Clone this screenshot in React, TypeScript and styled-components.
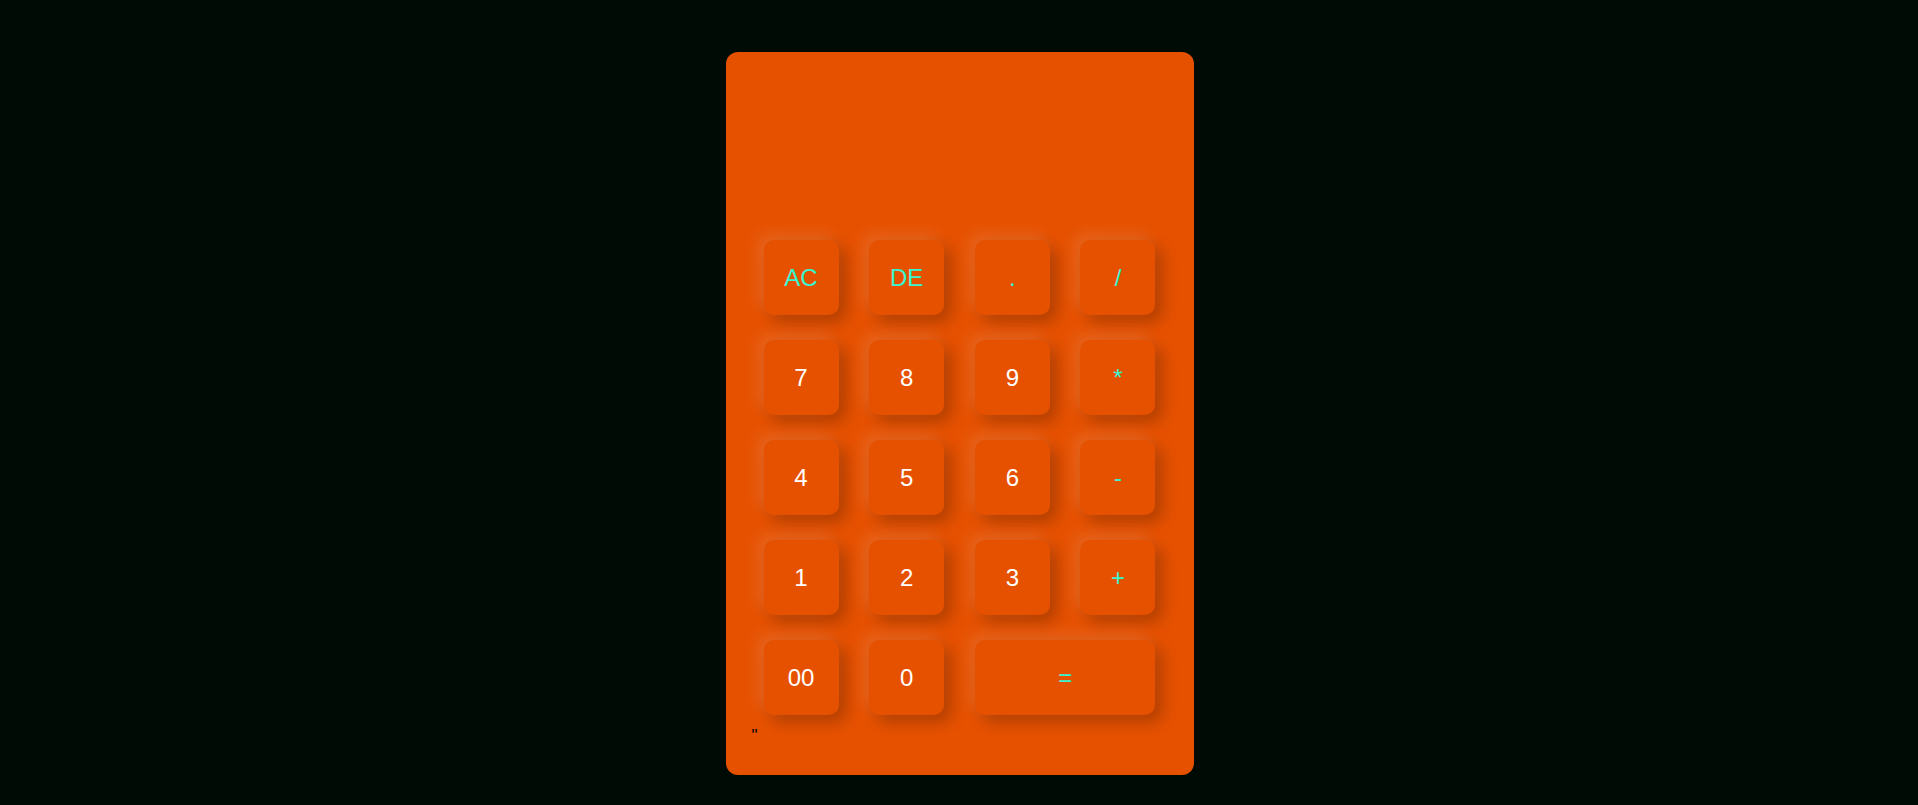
import React from "react";
import styled, { createGlobalStyle } from "styled-components";

const Global = createGlobalStyle`
  html, body {
    margin: 0;
    padding: 0;
    background: #000b06;
  }
  body {
    font-family: "Liberation Sans", Arial, sans-serif;
  }
`;

const Page = styled.div`
  display: flex;
  justify-content: center;
  padding-top: 52px;
  padding-left: 1px;
`;

const Calculator = styled.div`
  width: 468px;
  height: 723px;
  box-sizing: border-box;
  background: #e65100;
  border-radius: 12px;
  padding: 0 26px;
  display: flex;
  flex-direction: column;
`;

const Display = styled.div`
  height: 188px;
  flex-shrink: 0;
`;

const Keys = styled.div`
  display: grid;
  grid-template-columns: repeat(4, 75px);
  grid-auto-rows: 75px;
  column-gap: 30.67px;
  row-gap: 25px;
  padding: 0 12px;
`;

const Key = styled.button<{ $op?: boolean; $wide?: boolean }>`
  border: none;
  outline: none;
  background: #e65100;
  border-radius: 10px;
  font-family: "Liberation Sans", Arial, sans-serif;
  font-size: 24px;
  color: ${(p) => (p.$op ? "#38f5cf" : "#ffffff")};
  grid-column: ${(p) => (p.$wide ? "span 2" : "auto")};
  box-shadow: -6px -6px 16px rgba(255, 255, 255, 0.12),
    7px 7px 16px rgba(0, 0, 0, 0.24);
  cursor: pointer;
  padding: 0;
`;

const Stray = styled.div`
  margin-top: 11px;
  font-family: "Liberation Sans", Arial, sans-serif;
  font-size: 17px;
  color: #000000;
`;

const keys: { label: string; op?: boolean; wide?: boolean }[] = [
  { label: "AC", op: true },
  { label: "DE", op: true },
  { label: ".", op: true },
  { label: "/", op: true },
  { label: "7" },
  { label: "8" },
  { label: "9" },
  { label: "*", op: true },
  { label: "4" },
  { label: "5" },
  { label: "6" },
  { label: "-", op: true },
  { label: "1" },
  { label: "2" },
  { label: "3" },
  { label: "+", op: true },
  { label: "00" },
  { label: "0" },
  { label: "=", op: true, wide: true },
];

export default function App() {
  return (
    <>
      <Global />
      <Page>
        <Calculator>
          <Display />
          <Keys>
            {keys.map((k) => (
              <Key key={k.label} $op={k.op} $wide={k.wide}>
                {k.label}
              </Key>
            ))}
          </Keys>
          <Stray>"</Stray>
        </Calculator>
      </Page>
    </>
  );
}
